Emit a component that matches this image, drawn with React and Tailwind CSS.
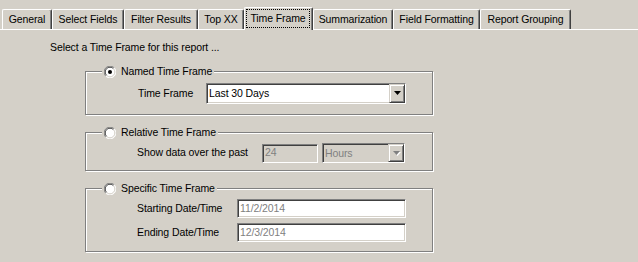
const TABS = [
  { label: 'General',          w: 'w-[50px]' },
  { label: 'Select Fields',    w: 'w-[72px]' },
  { label: 'Filter Results',   w: 'w-[74px]' },
  { label: 'Top XX',           w: 'w-[46px]' },
  { label: 'Time Frame',       w: 'w-[69px]', active: true },
  { label: 'Summarization',    w: 'w-[80px]' },
  { label: 'Field Formatting', w: 'w-[87px]' },
  { label: 'Report Grouping',  w: 'w-[91px]' },
]

const SUNKEN = 'border border-t-[#808080] border-l-[#808080] border-r-white border-b-white shadow-[inset_1px_1px_0_#404040,inset_-1px_-1px_0_#d4d0c8]'
const RAISED = 'border border-t-[#d4d0c8] border-l-[#d4d0c8] border-r-[#404040] border-b-[#404040] shadow-[inset_1px_1px_0_#fff,inset_-1px_-1px_0_#808080]'

function Radio({ checked }) {
  return (
    <svg width="12" height="12" viewBox="0 0 12 12" className="shrink-0">
      <circle cx="6" cy="6" r="5.5" fill="#fff" />
      <path d="M1.8 10.2 A5.5 5.5 0 0 1 10.2 1.8" stroke="#808080" strokeWidth="1" fill="none" />
      <path d="M10.2 1.8 A5.5 5.5 0 0 1 1.8 10.2" stroke="#fff" strokeWidth="1" fill="none" />
      <path d="M2.6 9.4 A4.5 4.5 0 0 1 9.4 2.6" stroke="#404040" strokeWidth="1" fill="none" />
      <path d="M9.4 2.6 A4.5 4.5 0 0 1 2.6 9.4" stroke="#d4d0c8" strokeWidth="1" fill="none" />
      {checked && <circle cx="6" cy="6" r="2" fill="#000" />}
    </svg>
  )
}

function Arrow({ disabled }) {
  return (
    <svg width="8" height="5" viewBox="0 0 8 5">
      {disabled && <path d="M1 1h7l-3.5 4z" fill="#fff" />}
      <path d="M0 0h7l-3.5 4z" fill={disabled ? '#808080' : '#000'} />
    </svg>
  )
}

function Select({ value, disabled, w, h }) {
  return (
    <div className={`${SUNKEN} ${w} ${h} flex items-center ${disabled ? 'bg-[#d4d0c8] text-[#808080]' : 'bg-white'}`}>
      <span className="flex-1 pl-[2px] leading-[13px]">{value}</span>
      <div className={`${RAISED} w-[16px] h-full bg-[#d4d0c8] flex items-center justify-center pl-[1px]`}>
        <Arrow disabled={disabled} />
      </div>
    </div>
  )
}

function Field({ value, w, grey }) {
  return (
    <div className={`${SUNKEN} ${w} h-[19px] flex items-center pl-[2px] text-[#808080] ${grey ? 'bg-[#d4d0c8]' : 'bg-white'}`}>
      {value}
    </div>
  )
}

function Group({ title, checked, className, children }) {
  return (
    <div className={`relative border border-[#808080] shadow-[inset_1px_1px_0_#fff,1px_1px_0_#fff] ${className}`}>
      <div className="absolute left-[16px] top-[-7px] h-[13px] flex items-center gap-[5px] px-[2px] bg-[#d4d0c8]">
        <Radio checked={checked} />
        <span className="leading-[13px]">{title}</span>
      </div>
      {children}
    </div>
  )
}

export default function App() {
  return (
    <div className="w-[638px] h-[262px] overflow-hidden bg-[#d4d0c8] text-black text-[10.5px] tracking-[-0.1px] font-['Liberation_Sans',Arial,sans-serif]">
      {/* ── Tabs ── */}
      <div className="flex items-end h-[30px] pl-[2px] border-b border-white">
        {TABS.map(tab => tab.active ? (
          <div
            key={tab.label}
            className={`${tab.w} h-[23px] -mb-px relative z-10 bg-[#d4d0c8] border-t border-l border-white border-r border-r-[#404040] rounded-t-[2px] shadow-[inset_-1px_0_0_#808080] flex items-start justify-center pt-[1px] pl-[1px] pr-[2px]`}
          >
            <span className="w-full h-[19px] border border-dotted border-black flex items-center justify-center leading-[13px]">
              {tab.label}
            </span>
          </div>
        ) : (
          <div
            key={tab.label}
            className={`${tab.w} h-[20px] border-t border-l border-white border-r border-r-[#404040] rounded-t-[2px] shadow-[inset_-1px_0_0_#808080] flex items-center justify-center leading-[13px] pb-[1px]`}
          >
            {tab.label}
          </div>
        ))}
      </div>

      {/* ── Page ── */}
      <div className="pl-[50px] mt-[11px] leading-[13px]">Select a Time Frame for this report ...</div>

      <div className="ml-[85px] w-[348px] mt-[17px]">
        <Group title="Named Time Frame" checked className="h-[44px]">
          <div className="flex items-center mt-[11px] pl-[52px]">
            <span className="w-[68px]">Time Frame</span>
            <Select value="Last 30 Days" w="w-[200px]" h="h-[21px]" />
          </div>
        </Group>

        <Group title="Relative Time Frame" className="h-[39px] mt-[17px]">
          <div className="flex items-center mt-[10px] pl-[51px]">
            <span className="w-[125px]">Show data over the past</span>
            <Field value="24" w="w-[56px]" grey />
            <div className="ml-[4px]">
              <Select value="Hours" disabled w="w-[83px]" h="h-[20px]" />
            </div>
          </div>
        </Group>

        <Group title="Specific Time Frame" className="h-[64px] mt-[17px]">
          <div className="flex flex-col gap-[5px] mt-[10px] pl-[51px]">
            <div className="flex items-center">
              <span className="w-[100px]">Starting Date/Time</span>
              <Field value="11/2/2014" w="w-[169px]" />
            </div>
            <div className="flex items-center">
              <span className="w-[100px]">Ending Date/Time</span>
              <Field value="12/3/2014" w="w-[169px]" />
            </div>
          </div>
        </Group>
      </div>
    </div>
  )
}
